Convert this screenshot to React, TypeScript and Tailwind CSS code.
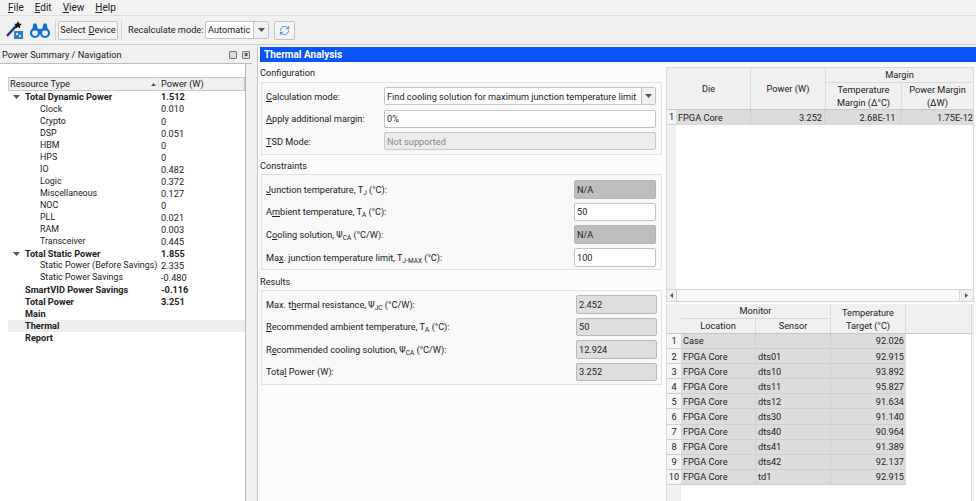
import React from "react";
import { RefreshCw } from "lucide-react";

const U = ({ children }: { children: React.ReactNode }) => <span className="underline underline-offset-1">{children}</span>;
const S = ({ children }: { children: React.ReactNode }) => <span className="text-[6.5px] relative top-[2px]">{children}</span>;

const Caret = () => (
  <svg width="7" height="4" viewBox="0 0 7 4"><path d="M0 0h7L3.5 4z" fill="#555" /></svg>
);

const tree: [string, string, number, boolean, boolean?][] = [
  ["Total Dynamic Power", "1.512", 0, true, true],
  ["Clock", "0.010", 1, false],
  ["Crypto", "0", 1, false],
  ["DSP", "0.051", 1, false],
  ["HBM", "0", 1, false],
  ["HPS", "0", 1, false],
  ["IO", "0.482", 1, false],
  ["Logic", "0.372", 1, false],
  ["Miscellaneous", "0.127", 1, false],
  ["NOC", "0", 1, false],
  ["PLL", "0.021", 1, false],
  ["RAM", "0.003", 1, false],
  ["Transceiver", "0.445", 1, false],
  ["Total Static Power", "1.855", 0, true, true],
  ["Static Power (Before Savings)", "2.335", 1, false],
  ["Static Power Savings", "-0.480", 1, false],
  ["SmartVID Power Savings", "-0.116", 0, true],
  ["Total Power", "3.251", 0, true],
  ["Main", "", 0, true],
  ["Thermal", "", 0, true],
  ["Report", "", 0, true],
];

const monitor: [string, string, string][] = [
  ["Case", "", "92.026"],
  ["FPGA Core", "dts01", "92.915"],
  ["FPGA Core", "dts10", "93.892"],
  ["FPGA Core", "dts11", "95.827"],
  ["FPGA Core", "dts12", "91.634"],
  ["FPGA Core", "dts30", "91.140"],
  ["FPGA Core", "dts40", "90.964"],
  ["FPGA Core", "dts41", "91.389"],
  ["FPGA Core", "dts42", "92.137"],
  ["FPGA Core", "td1", "92.915"],
];

const Row = ({ label, children }: { label: React.ReactNode; children: React.ReactNode }) => (
  <div className="flex items-center justify-between h-[18.5px]">
    <div className="whitespace-nowrap">{label}</div>
    {children}
  </div>
);

const whiteField = "h-[18.5px] w-[82px] bg-white border border-[#c4c4c4] rounded-[2px] px-[2px] flex items-center";
const darkField = "h-[18.5px] w-[82px] bg-[#bdbdbd] border border-[#b4b4b4] rounded-[2px] px-[2px] flex items-center";
const resultField = "h-[18.5px] w-[81px] bg-[#dedede] border border-[#b9b9b9] rounded-[2px] px-[2px] flex items-center";

export default function App() {
  return (
    <div className="w-[976px] h-[501px] overflow-hidden bg-[#f0f0f0] text-[#222] text-[9.2px] leading-none flex flex-col" style={{ fontFamily: 'Roboto, sans-serif' }}>
      {/* menu */}
      <div className="h-[16px] flex items-center gap-[11px] pl-[8px] border-b border-[#e0e0e0] bg-[#f2f2f2] text-[10px]">
        <span><U>F</U>ile</span><span><U>E</U>dit</span><span><U>V</U>iew</span><span><U>H</U>elp</span>
      </div>
      {/* toolbar */}
      <div className="h-[29px] flex items-center pl-[6px] border-b border-[#d0d0d0] bg-[#f0f0f0]">
        <svg width="18" height="20" viewBox="0 0 18 20">
          <path d="M1 16 L11 5" stroke="#1a3a7a" strokeWidth="2.4" />
          <path d="M12 1l1.2 2.5 2.6.4-1.9 1.9.5 2.6-2.4-1.3-2.3 1.3.4-2.6L8.3 3.9l2.6-.4z" fill="#111" />
          <rect x="8" y="11" width="9" height="8" fill="#2f7fd0" />
          <rect x="10" y="13" width="2" height="2" fill="#cfe3f7" />
          <rect x="13" y="15" width="2" height="2" fill="#cfe3f7" />
        </svg>
        <svg width="20" height="18" viewBox="0 0 20 18" className="ml-[6px]">
          <circle cx="5" cy="12" r="4" fill="none" stroke="#0d6fd6" strokeWidth="2.2" />
          <circle cx="15" cy="12" r="4" fill="none" stroke="#0d6fd6" strokeWidth="2.2" />
          <path d="M2 10 L3.5 2.5h3L8 9M18 10 L16.5 2.5h-3L12 9M8 8h4v4H8z" fill="#0d6fd6" />
        </svg>
        <div className="w-px h-[20px] bg-[#d4d4d4] ml-[5px]" />
        <div className="ml-[2px] w-[60px] h-[19px] border border-[#c4c4c4] rounded-[2px] bg-[#f4f4f4] flex items-center justify-center">Select <span className="ml-[3px]"><U>D</U>evice</span></div>
        <div className="w-px h-[20px] bg-[#d4d4d4] ml-[3px]" />
        <span className="ml-[6px] w-[74px] whitespace-nowrap">Recalculate mode:</span>
        <div className="ml-[3px] w-[64px] h-[18px] bg-white border border-[#c4c4c4] rounded-[2px] flex items-center">
          <span className="pl-[2px] flex-1">Automatic</span>
          <span className="w-[15px] h-full border-l border-[#c4c4c4] bg-[#f0f0f0] flex items-center justify-center"><Caret /></span>
        </div>
        <div className="ml-[5px] w-[21px] h-[19px] border border-[#c4c4c4] rounded-[2px] bg-[#f4f4f4] flex items-center justify-center">
          <RefreshCw size={11} color="#2f80d0" strokeWidth={1.8} />
        </div>
      </div>
      <div className="flex-1 flex min-h-0 pt-[2px]">
        {/* left */}
        <div className="w-[252px] flex flex-col shrink-0">
          <div className="h-[17px] flex items-center justify-between pl-[2px] pr-[2px] border-b border-[#bdbdbd] bg-[#f0f0f0]">
            <span>Power Summary / Navigation</span>
            <span className="flex gap-[5px]">
              <span className="w-[8px] h-[8px] border border-[#777] rounded-[1px] bg-[#ddd] block" />
              <span className="w-[8px] h-[8px] border border-[#777] rounded-[1px] bg-[#ddd] flex items-center justify-center text-[7px] font-bold">×</span>
            </span>
          </div>
          <div className="flex-1 w-[246px] bg-white pl-[8px] pt-[13px] flex flex-col border-r border-[#b5b5b5]">
            <div className="h-[14px] flex items-center bg-[#f0f0f0] border border-[#c8c8c8] pl-[1px] shrink-0">
              <span className="w-[141px]">Resource Type</span>
              <span className="w-[5px] mr-[1px] flex"><svg width="5" height="3" viewBox="0 0 5 3"><path d="M0 3h5L2.5 0z" fill="#555" /></svg></span>
              <span className="ml-[1px] border-l border-[#d8d8d8] pl-[2px]">Power (W)</span>
            </div>
            {tree.map(([n, v, lvl, bold, caret]) => (
              <div key={n} className={"h-[12.05px] flex items-center shrink-0 " + (bold ? "font-bold " : "") + (n === "Thermal" ? "bg-[#eeeeee]" : "")}>
                <span className="w-[17px] pl-[5px] flex items-center">{caret && <Caret />}</span>
                <span className={"whitespace-nowrap " + (lvl ? "pl-[15px] w-[136px] text-[8.9px]" : "w-[136px]")}>{n}</span>
                <span>{v}</span>
              </div>
            ))}
          </div>
        </div>
        {/* splitter */}
        <div className="w-[6px] bg-[#f0f0f0] border-r border-[#c8c8c8] shrink-0" />
        {/* right */}
        <div className="flex-1 flex flex-col min-w-0 pl-[2px] bg-[#fcfcfc]">
          <div className="h-[15px] bg-[#0a55fb] text-white font-bold text-[10px] flex items-center pl-[4px] shrink-0">Thermal Analysis</div>
          <div className="flex-1 flex min-h-0">
            {/* form */}
            <div className="w-[402px] flex flex-col shrink-0">
              <div className="h-[20px] flex items-center pt-[2px]">Configuration</div>
              <div className="ml-px h-[73px] bg-[#f8f8f8] border border-[#e2e2e2] pl-[4px] pr-[5px] pt-[4px] flex flex-col gap-[4px]">
                <Row label={<><U>C</U>alculation mode:</>}>
                  <div className="w-[272px] h-[18px] bg-white border border-[#c4c4c4] rounded-[2px] flex items-center">
                    <span className="flex-1 pl-[2px] whitespace-nowrap">Find cooling solution for maximum junction temperature limit</span>
                    <span className="w-[14px] h-full border-l border-[#c4c4c4] bg-[#f0f0f0] flex items-center justify-center"><Caret /></span>
                  </div>
                </Row>
                <Row label={<><U>A</U>pply additional margin:</>}>
                  <div className="w-[272px] h-[18px] bg-white border border-[#c4c4c4] rounded-[2px] flex items-center pl-[2px]">0%</div>
                </Row>
                <Row label={<><U>T</U>SD Mode:</>}>
                  <div className="w-[272px] h-[18px] bg-[#ececec] border border-[#c8c8c8] rounded-[2px] flex items-center pl-[2px] text-[#8a8a8a]">Not supported</div>
                </Row>
              </div>
              <div className="h-[19px] flex items-center pt-[3px]">Constraints</div>
              <div className="ml-px h-[96px] bg-[#f8f8f8] border border-[#e2e2e2] pl-[4px] pr-[5px] pt-[5px] flex flex-col gap-[4.2px]">
                <Row label={<><U>J</U>unction temperature, T<S>J</S> (°C):</>}><div className={darkField}>N/A</div></Row>
                <Row label={<>A<U>m</U>bient temperature, T<S>A</S> (°C):</>}><div className={whiteField}>50</div></Row>
                <Row label={<>C<U>o</U>oling solution, Ψ<S>CA</S> (°C/W):</>}><div className={darkField}>N/A</div></Row>
                <Row label={<>Ma<U>x</U>. junction temperature limit, T<S>J-MAX</S> (°C):</>}><div className={whiteField}>100</div></Row>
              </div>
              <div className="h-[20px] flex items-center pt-[4px]">Results</div>
              <div className="ml-px h-[95px] bg-[#f8f8f8] border border-[#e2e2e2] pl-[4px] pr-[4px] pt-[4px] flex flex-col gap-[4px]">
                <Row label={<>Max. t<U>h</U>ermal resistance, Ψ<S>JC</S> (°C/W):</>}><div className={resultField}>2.452</div></Row>
                <Row label={<><U>R</U>ecommended ambient temperature, T<S>A</S> (°C):</>}><div className={resultField}>50</div></Row>
                <Row label={<>R<U>e</U>commended cooling solution, Ψ<S>CA</S> (°C/W):</>}><div className={resultField}>12.924</div></Row>
                <Row label={<>Tota<U>l</U> Power (W):</>}><div className={resultField}>3.252</div></Row>
              </div>
            </div>
            {/* tables */}
            <div className="flex-1 flex flex-col pl-[4px] pr-[2px] pt-[5px] min-w-0">
              <div className="h-[235px] flex flex-col border border-[#d8d8d8] bg-white shrink-0 overflow-hidden">
                <div className="flex-1 min-h-0 flex flex-col">
                  <div className="flex h-[42px] bg-[#f0f0f0] shrink-0 border-b border-[#c8c8c8]">
                    <div className="w-[84px] flex items-center justify-center border-r border-[#dadada]">Die</div>
                    <div className="w-[75px] flex items-center justify-center border-r border-[#dadada]">Power (W)</div>
                    <div className="flex-1 flex flex-col">
                      <div className="h-[15px] flex items-center justify-center border-b border-[#dadada]">Margin</div>
                      <div className="flex-1 flex">
                        <div className="w-[76px] border-r border-[#dadada] flex items-center justify-center text-center leading-[13px]">Temperature<br />Margin (Δ°C)</div>
                        <div className="flex-1 flex items-center justify-center text-center leading-[13px] whitespace-nowrap">Power Margin<br />(ΔW)</div>
                      </div>
                    </div>
                  </div>
                  <div className="flex-1 flex min-h-0">
                    <div className="w-[9px] bg-[#f0f0f0] shrink-0">
                      <div className="h-[15px] flex items-center justify-center bg-[#f5f5f5] border-b border-[#d0d0d0]">1</div>
                    </div>
                    <div className="flex-1 min-w-0">
                      <div className="h-[15px] flex bg-[#dcdcdc] whitespace-nowrap items-center">
                        <div className="w-[75px] pl-[2px] border-r border-[#d0d0d0] h-full flex items-center">FPGA Core</div>
                        <div className="w-[75px] pr-[2px] text-right border-r border-[#d0d0d0] h-full flex items-center justify-end">3.252</div>
                        <div className="w-[76px] pr-[4px] border-r border-[#d0d0d0] h-full flex items-center justify-end">2.68E-11</div>
                        <div className="w-[73px] h-full flex items-center justify-end">1.75E-12</div>
                      </div>
                    </div>
                  </div>
                </div>
                <div className="h-[12px] flex bg-[#f0f0f0] border-t border-[#d4d4d4] shrink-0 items-center">
                  <div className="w-[9px] flex items-center justify-center"><svg width="3" height="5" viewBox="0 0 3 5"><path d="M3 0v5L0 2.5z" fill="#555" /></svg></div>
                  <div className="flex-1 h-full bg-[#f8f8f8] border-x border-[#d4d4d4]" />
                  <div className="w-[13px] flex items-center justify-center"><svg width="3" height="5" viewBox="0 0 3 5"><path d="M0 0v5l3-2.5z" fill="#555" /></svg></div>
                </div>
              </div>
              <div className="h-[2px] shrink-0" />
              <div className="flex-1 border-l border-[#d8d8d8] bg-white flex min-h-0">
                <div className="w-[14px] bg-[#f0f0f0] shrink-0 flex flex-col">
                  <div className="h-[30px] shrink-0 border-b border-[#c8c8c8]" />
                  {monitor.map((_, i) => (
                    <div key={i} className="h-[15.1px] shrink-0 flex items-center justify-center bg-[#f5f5f5] border-b border-[#d0d0d0]">{i + 1}</div>
                  ))}
                </div>
                <div className="flex-1 flex flex-col min-w-0">
                  <div className="flex h-[30px] bg-[#f0f0f0] shrink-0 border-b border-[#c8c8c8]">
                    <div className="w-[150px] flex flex-col border-r border-[#dadada]">
                      <div className="h-[15px] flex items-center justify-center border-b border-[#dadada]">Monitor</div>
                      <div className="flex-1 flex">
                        <div className="w-[75px] flex items-center justify-center border-r border-[#dadada]">Location</div>
                        <div className="flex-1 flex items-center justify-center">Sensor</div>
                      </div>
                    </div>
                    <div className="w-[75px] flex items-center justify-center text-center leading-[13px] border-r border-[#dadada]">Temperature<br />Target (°C)</div>
                  </div>
                  {monitor.map(([l, s, t], i) => (
                    <div key={i} className="h-[15.1px] w-[225px] shrink-0 flex bg-[#dcdcdc] border-b border-[#d0d0d0]">
                      <div className="w-[75px] pl-[2px] flex items-center border-r border-[#d0d0d0]">{l}</div>
                      <div className="w-[75px] pl-[2px] flex items-center border-r border-[#d0d0d0]">{s}</div>
                      <div className="flex-1 pr-[2px] flex items-center justify-end">{t}</div>
                    </div>
                  ))}
                </div>
                <div className="w-[3px] bg-[#f0f0f0] border-l border-[#d8d8d8]" />
              </div>
            </div>
          </div>
        </div>
      </div>
    </div>
  );
}
